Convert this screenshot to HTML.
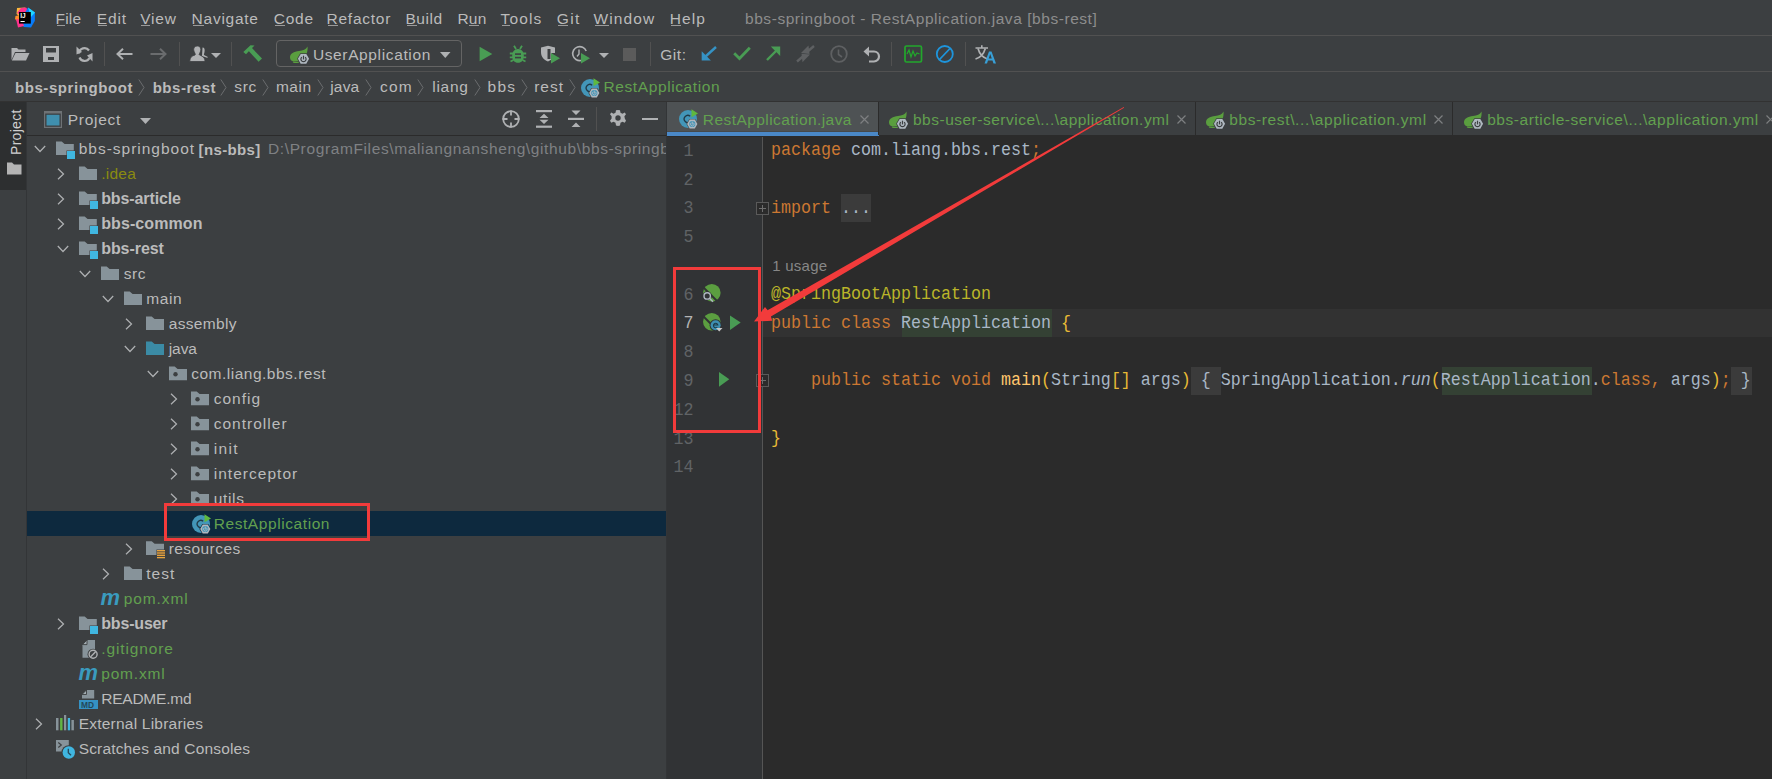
<!DOCTYPE html>
<html><head><meta charset="utf-8"><style>
html,body{margin:0;padding:0}
body{width:1772px;height:779px;overflow:hidden;position:relative;background:#3c3f41;font-family:"Liberation Sans",sans-serif}
svg{display:block}
</style></head><body>
<div style="position:absolute;left:0px;top:0px;width:1772px;height:35px;background:#3c3f41;"></div>
<div style="position:absolute;left:0px;top:35px;width:1772px;height:1px;background:#515151;"></div>
<div style="position:absolute;left:0px;top:36px;width:1772px;height:35px;background:#3c3f41;"></div>
<div style="position:absolute;left:0px;top:71px;width:1772px;height:1px;background:#515151;"></div>
<div style="position:absolute;left:0px;top:72px;width:1772px;height:29px;background:#3c3f41;"></div>
<div style="position:absolute;left:0px;top:101px;width:1772px;height:1px;background:#323232;"></div>
<div style="position:absolute;left:0px;top:102px;width:26px;height:677px;background:#3c3f41;"></div>
<div style="position:absolute;left:0px;top:102px;width:26px;height:88px;background:#2d2f30;"></div>
<div style="position:absolute;left:26px;top:102px;width:1px;height:677px;background:#333537;"></div>
<div style="position:absolute;left:27px;top:102px;width:639px;height:677px;background:#3c3f41;"></div>
<div style="position:absolute;left:27px;top:135px;width:639px;height:1px;background:#2b2b2b;"></div>
<div style="position:absolute;left:666px;top:102px;width:1px;height:677px;background:#333537;"></div>
<div style="position:absolute;left:667px;top:102px;width:1105px;height:33px;background:#3c3f41;"></div>
<div style="position:absolute;left:667px;top:135px;width:1105px;height:2px;background:#2b2b2b;"></div>
<div style="position:absolute;left:667px;top:102px;width:211px;height:29px;background:#4e5254;"></div>
<div style="position:absolute;left:667px;top:131px;width:211px;height:1px;background:#46494b;"></div>
<div style="position:absolute;left:667px;top:132px;width:212px;height:4px;background:#4a88c7;"></div>
<div style="position:absolute;left:878px;top:102px;width:1px;height:33px;background:#2b2b2b;"></div>
<div style="position:absolute;left:1195px;top:102px;width:1px;height:33px;background:#2b2b2b;"></div>
<div style="position:absolute;left:1452px;top:102px;width:1px;height:33px;background:#2b2b2b;"></div>
<div style="position:absolute;left:667px;top:137px;width:95px;height:642px;background:#313335;"></div>
<div style="position:absolute;left:762px;top:137px;width:1px;height:642px;background:#555555;"></div>
<div style="position:absolute;left:763px;top:137px;width:1009px;height:642px;background:#2b2b2b;"></div>
<div style="position:absolute;left:55.60px;top:10.88px;height:15.5px;line-height:15.5px;font-family:'Liberation Sans',sans-serif;font-size:15.5px;font-weight:normal;color:#bbbbbb;white-space:pre;letter-spacing:0.172px;">File</div>
<div style="position:absolute;left:56.5px;top:25px;width:8px;height:1px;background:#9a9a9a;"></div>
<div style="position:absolute;left:96.80px;top:10.88px;height:15.5px;line-height:15.5px;font-family:'Liberation Sans',sans-serif;font-size:15.5px;font-weight:normal;color:#bbbbbb;white-space:pre;letter-spacing:0.827px;">Edit</div>
<div style="position:absolute;left:97.8px;top:25px;width:9px;height:1px;background:#9a9a9a;"></div>
<div style="position:absolute;left:140.20px;top:10.88px;height:15.5px;line-height:15.5px;font-family:'Liberation Sans',sans-serif;font-size:15.5px;font-weight:normal;color:#bbbbbb;white-space:pre;letter-spacing:0.791px;">View</div>
<div style="position:absolute;left:141px;top:25px;width:9px;height:1px;background:#9a9a9a;"></div>
<div style="position:absolute;left:191.60px;top:10.88px;height:15.5px;line-height:15.5px;font-family:'Liberation Sans',sans-serif;font-size:15.5px;font-weight:normal;color:#bbbbbb;white-space:pre;letter-spacing:0.745px;">Navigate</div>
<div style="position:absolute;left:192.5px;top:25px;width:11px;height:1px;background:#9a9a9a;"></div>
<div style="position:absolute;left:273.70px;top:10.88px;height:15.5px;line-height:15.5px;font-family:'Liberation Sans',sans-serif;font-size:15.5px;font-weight:normal;color:#bbbbbb;white-space:pre;letter-spacing:0.779px;">Code</div>
<div style="position:absolute;left:274.5px;top:25px;width:10px;height:1px;background:#9a9a9a;"></div>
<div style="position:absolute;left:326.50px;top:10.88px;height:15.5px;line-height:15.5px;font-family:'Liberation Sans',sans-serif;font-size:15.5px;font-weight:normal;color:#bbbbbb;white-space:pre;letter-spacing:0.758px;">Refactor</div>
<div style="position:absolute;left:327.5px;top:25px;width:10px;height:1px;background:#9a9a9a;"></div>
<div style="position:absolute;left:405.50px;top:10.88px;height:15.5px;line-height:15.5px;font-family:'Liberation Sans',sans-serif;font-size:15.5px;font-weight:normal;color:#bbbbbb;white-space:pre;letter-spacing:0.533px;">Build</div>
<div style="position:absolute;left:406.5px;top:25px;width:10px;height:1px;background:#9a9a9a;"></div>
<div style="position:absolute;left:457.50px;top:10.88px;height:15.5px;line-height:15.5px;font-family:'Liberation Sans',sans-serif;font-size:15.5px;font-weight:normal;color:#bbbbbb;white-space:pre;letter-spacing:0.181px;">Run</div>
<div style="position:absolute;left:469px;top:25px;width:10px;height:1px;background:#9a9a9a;"></div>
<div style="position:absolute;left:500.50px;top:10.88px;height:15.5px;line-height:15.5px;font-family:'Liberation Sans',sans-serif;font-size:15.5px;font-weight:normal;color:#bbbbbb;white-space:pre;letter-spacing:1.153px;">Tools</div>
<div style="position:absolute;left:501.5px;top:25px;width:8px;height:1px;background:#9a9a9a;"></div>
<div style="position:absolute;left:556.70px;top:10.88px;height:15.5px;line-height:15.5px;font-family:'Liberation Sans',sans-serif;font-size:15.5px;font-weight:normal;color:#bbbbbb;white-space:pre;letter-spacing:1.394px;">Git</div>
<div style="position:absolute;left:557.5px;top:25px;width:10px;height:1px;background:#9a9a9a;"></div>
<div style="position:absolute;left:593.50px;top:10.88px;height:15.5px;line-height:15.5px;font-family:'Liberation Sans',sans-serif;font-size:15.5px;font-weight:normal;color:#bbbbbb;white-space:pre;letter-spacing:1.132px;">Window</div>
<div style="position:absolute;left:594.5px;top:25px;width:14px;height:1px;background:#9a9a9a;"></div>
<div style="position:absolute;left:669.70px;top:10.88px;height:15.5px;line-height:15.5px;font-family:'Liberation Sans',sans-serif;font-size:15.5px;font-weight:normal;color:#bbbbbb;white-space:pre;letter-spacing:1.136px;">Help</div>
<div style="position:absolute;left:670.5px;top:25px;width:10px;height:1px;background:#9a9a9a;"></div>
<div style="position:absolute;left:745.00px;top:10.88px;height:15.5px;line-height:15.5px;font-family:'Liberation Sans',sans-serif;font-size:15.5px;font-weight:normal;color:#8d8d8d;white-space:pre;letter-spacing:0.556px;">bbs-springboot - RestApplication.java [bbs-rest]</div>
<div style="position:absolute;left:276px;top:40px;width:184px;height:25px;border:1px solid #646464;border-radius:4px;background:#3c3f41"></div>
<div style="position:absolute;left:312.90px;top:47.28px;height:15.5px;line-height:15.5px;font-family:'Liberation Sans',sans-serif;font-size:15.5px;font-weight:normal;color:#bbbbbb;white-space:pre;letter-spacing:0.631px;">UserApplication</div>
<div style="position:absolute;left:660.20px;top:47.28px;height:15.5px;line-height:15.5px;font-family:'Liberation Sans',sans-serif;font-size:15.5px;font-weight:normal;color:#bbbbbb;white-space:pre;letter-spacing:0.558px;">Git:</div>
<div style="position:absolute;left:14.90px;top:79.60px;height:15px;line-height:15px;font-family:'Liberation Sans',sans-serif;font-size:15px;font-weight:bold;color:#bbbbbb;white-space:pre;letter-spacing:0.586px;">bbs-springboot</div>
<div style="position:absolute;left:152.70px;top:79.60px;height:15px;line-height:15px;font-family:'Liberation Sans',sans-serif;font-size:15px;font-weight:bold;color:#bbbbbb;white-space:pre;letter-spacing:0.516px;">bbs-rest</div>
<div style="position:absolute;left:234.20px;top:79.18px;height:15.5px;line-height:15.5px;font-family:'Liberation Sans',sans-serif;font-size:15.5px;font-weight:normal;color:#bbbbbb;white-space:pre;letter-spacing:0.714px;">src</div>
<div style="position:absolute;left:275.90px;top:79.18px;height:15.5px;line-height:15.5px;font-family:'Liberation Sans',sans-serif;font-size:15.5px;font-weight:normal;color:#bbbbbb;white-space:pre;letter-spacing:0.564px;">main</div>
<div style="position:absolute;left:330.20px;top:79.18px;height:15.5px;line-height:15.5px;font-family:'Liberation Sans',sans-serif;font-size:15.5px;font-weight:normal;color:#bbbbbb;white-space:pre;letter-spacing:0.188px;">java</div>
<div style="position:absolute;left:380.10px;top:79.18px;height:15.5px;line-height:15.5px;font-family:'Liberation Sans',sans-serif;font-size:15.5px;font-weight:normal;color:#bbbbbb;white-space:pre;letter-spacing:1.152px;">com</div>
<div style="position:absolute;left:432.20px;top:79.18px;height:15.5px;line-height:15.5px;font-family:'Liberation Sans',sans-serif;font-size:15.5px;font-weight:normal;color:#bbbbbb;white-space:pre;letter-spacing:0.763px;">liang</div>
<div style="position:absolute;left:487.60px;top:79.18px;height:15.5px;line-height:15.5px;font-family:'Liberation Sans',sans-serif;font-size:15.5px;font-weight:normal;color:#bbbbbb;white-space:pre;letter-spacing:1.200px;">bbs</div>
<div style="position:absolute;left:534.20px;top:79.18px;height:15.5px;line-height:15.5px;font-family:'Liberation Sans',sans-serif;font-size:15.5px;font-weight:normal;color:#bbbbbb;white-space:pre;letter-spacing:0.985px;">rest</div>
<div style="position:absolute;left:603.50px;top:79.18px;height:15.5px;line-height:15.5px;font-family:'Liberation Sans',sans-serif;font-size:15.5px;font-weight:normal;color:#62a04f;white-space:pre;letter-spacing:0.600px;">RestApplication</div>
<svg style="position:absolute;left:138px;top:79px;overflow:visible" width="7" height="17" viewBox="0 0 7 17"><path d="M0.8 0.5 L6 8.5 L0.8 16.5" fill="none" stroke="#6b6d6f" stroke-width="1"/></svg>
<svg style="position:absolute;left:220px;top:79px;overflow:visible" width="7" height="17" viewBox="0 0 7 17"><path d="M0.8 0.5 L6 8.5 L0.8 16.5" fill="none" stroke="#6b6d6f" stroke-width="1"/></svg>
<svg style="position:absolute;left:262px;top:79px;overflow:visible" width="7" height="17" viewBox="0 0 7 17"><path d="M0.8 0.5 L6 8.5 L0.8 16.5" fill="none" stroke="#6b6d6f" stroke-width="1"/></svg>
<svg style="position:absolute;left:317px;top:79px;overflow:visible" width="7" height="17" viewBox="0 0 7 17"><path d="M0.8 0.5 L6 8.5 L0.8 16.5" fill="none" stroke="#6b6d6f" stroke-width="1"/></svg>
<svg style="position:absolute;left:365px;top:79px;overflow:visible" width="7" height="17" viewBox="0 0 7 17"><path d="M0.8 0.5 L6 8.5 L0.8 16.5" fill="none" stroke="#6b6d6f" stroke-width="1"/></svg>
<svg style="position:absolute;left:417px;top:79px;overflow:visible" width="7" height="17" viewBox="0 0 7 17"><path d="M0.8 0.5 L6 8.5 L0.8 16.5" fill="none" stroke="#6b6d6f" stroke-width="1"/></svg>
<svg style="position:absolute;left:474px;top:79px;overflow:visible" width="7" height="17" viewBox="0 0 7 17"><path d="M0.8 0.5 L6 8.5 L0.8 16.5" fill="none" stroke="#6b6d6f" stroke-width="1"/></svg>
<svg style="position:absolute;left:521px;top:79px;overflow:visible" width="7" height="17" viewBox="0 0 7 17"><path d="M0.8 0.5 L6 8.5 L0.8 16.5" fill="none" stroke="#6b6d6f" stroke-width="1"/></svg>
<svg style="position:absolute;left:569px;top:79px;overflow:visible" width="7" height="17" viewBox="0 0 7 17"><path d="M0.8 0.5 L6 8.5 L0.8 16.5" fill="none" stroke="#6b6d6f" stroke-width="1"/></svg>
<div style="position:absolute;left:67.70px;top:112.28px;height:15.5px;line-height:15.5px;font-family:'Liberation Sans',sans-serif;font-size:15.5px;font-weight:normal;color:#bbbbbb;white-space:pre;letter-spacing:0.725px;">Project</div>
<div style="position:absolute;left:702.80px;top:111.88px;height:15.5px;line-height:15.5px;font-family:'Liberation Sans',sans-serif;font-size:15.5px;font-weight:normal;color:#62a04f;white-space:pre;letter-spacing:0.434px;">RestApplication.java</div>
<svg style="position:absolute;left:859.8px;top:114.5px;overflow:visible" width="9" height="9" viewBox="0 0 9 9"><path d="M0.5 0.5 L8.5 8.5 M8.5 0.5 L0.5 8.5" stroke="#7d7f81" stroke-width="1.2"/></svg>
<div style="position:absolute;left:913.00px;top:111.88px;height:15.5px;line-height:15.5px;font-family:'Liberation Sans',sans-serif;font-size:15.5px;font-weight:normal;color:#62a04f;white-space:pre;letter-spacing:0.496px;">bbs-user-service\...\application.yml</div>
<svg style="position:absolute;left:1176.7px;top:114.5px;overflow:visible" width="9" height="9" viewBox="0 0 9 9"><path d="M0.5 0.5 L8.5 8.5 M8.5 0.5 L0.5 8.5" stroke="#7d7f81" stroke-width="1.2"/></svg>
<div style="position:absolute;left:1229.20px;top:111.88px;height:15.5px;line-height:15.5px;font-family:'Liberation Sans',sans-serif;font-size:15.5px;font-weight:normal;color:#62a04f;white-space:pre;letter-spacing:0.624px;">bbs-rest\...\application.yml</div>
<svg style="position:absolute;left:1434px;top:114.5px;overflow:visible" width="9" height="9" viewBox="0 0 9 9"><path d="M0.5 0.5 L8.5 8.5 M8.5 0.5 L0.5 8.5" stroke="#7d7f81" stroke-width="1.2"/></svg>
<div style="position:absolute;left:1487.20px;top:111.88px;height:15.5px;line-height:15.5px;font-family:'Liberation Sans',sans-serif;font-size:15.5px;font-weight:normal;color:#62a04f;white-space:pre;letter-spacing:0.558px;">bbs-article-service\...\application.yml</div>
<svg style="position:absolute;left:1765.6px;top:114.5px;overflow:visible" width="9" height="9" viewBox="0 0 9 9"><path d="M0.5 0.5 L8.5 8.5 M8.5 0.5 L0.5 8.5" stroke="#7d7f81" stroke-width="1.2"/></svg>
<div style="position:absolute;left:27px;top:511px;width:639px;height:25px;background:#0d293e;"></div>
<svg style="position:absolute;left:34.0px;top:144.5px;overflow:visible" width="12" height="8" viewBox="0 0 12 8"><path d="M0.8 1 L6 6.5 L11.2 1" fill="none" stroke="#aeb0b2" stroke-width="1.25"/></svg>
<div style="position:absolute;left:78.70px;top:141.08px;height:15.5px;line-height:15.5px;font-family:'Liberation Sans',sans-serif;font-size:15.5px;font-weight:normal;color:#bbbbbb;white-space:pre;letter-spacing:0.989px;">bbs-springboot</div>
<div style="position:absolute;left:198.60px;top:141.50px;height:15px;line-height:15px;font-family:'Liberation Sans',sans-serif;font-size:15px;font-weight:bold;color:#bbbbbb;white-space:pre;letter-spacing:0.361px;">[ns-bbs]</div>
<div style="position:absolute;left:266px;top:136px;width:400px;height:25px;overflow:hidden">
<div style="position:absolute;left:-266px;top:0;width:1000px;height:25px">
<div style="position:absolute;left:268.00px;top:5.08px;height:15.5px;line-height:15.5px;font-family:'Liberation Sans',sans-serif;font-size:15.5px;font-weight:normal;color:#7f8184;white-space:pre;letter-spacing:0.620px;">D:\ProgramFiles\maliangnansheng\github\bbs-springboot</div>
</div></div>
<svg style="position:absolute;left:57.0px;top:167.5px;overflow:visible" width="8" height="12" viewBox="0 0 8 12"><path d="M1 0.8 L6.5 6 L1 11.2" fill="none" stroke="#aeb0b2" stroke-width="1.25"/></svg>
<div style="position:absolute;left:101.20px;top:166.08px;height:15.5px;line-height:15.5px;font-family:'Liberation Sans',sans-serif;font-size:15.5px;font-weight:normal;color:#8a8b10;white-space:pre;letter-spacing:0.269px;">.idea</div>
<svg style="position:absolute;left:57.0px;top:192.5px;overflow:visible" width="8" height="12" viewBox="0 0 8 12"><path d="M1 0.8 L6.5 6 L1 11.2" fill="none" stroke="#aeb0b2" stroke-width="1.25"/></svg>
<div style="position:absolute;left:101.20px;top:190.66px;height:16px;line-height:16px;font-family:'Liberation Sans',sans-serif;font-size:16px;font-weight:bold;color:#bbbbbb;white-space:pre;letter-spacing:-0.112px;">bbs-article</div>
<svg style="position:absolute;left:57.0px;top:217.5px;overflow:visible" width="8" height="12" viewBox="0 0 8 12"><path d="M1 0.8 L6.5 6 L1 11.2" fill="none" stroke="#aeb0b2" stroke-width="1.25"/></svg>
<div style="position:absolute;left:101.20px;top:215.66px;height:16px;line-height:16px;font-family:'Liberation Sans',sans-serif;font-size:16px;font-weight:bold;color:#bbbbbb;white-space:pre;letter-spacing:0.094px;">bbs-common</div>
<svg style="position:absolute;left:56.5px;top:244.5px;overflow:visible" width="12" height="8" viewBox="0 0 12 8"><path d="M0.8 1 L6 6.5 L11.2 1" fill="none" stroke="#aeb0b2" stroke-width="1.25"/></svg>
<div style="position:absolute;left:101.20px;top:240.66px;height:16px;line-height:16px;font-family:'Liberation Sans',sans-serif;font-size:16px;font-weight:bold;color:#bbbbbb;white-space:pre;letter-spacing:-0.061px;">bbs-rest</div>
<svg style="position:absolute;left:79.0px;top:269.5px;overflow:visible" width="12" height="8" viewBox="0 0 12 8"><path d="M0.8 1 L6 6.5 L11.2 1" fill="none" stroke="#aeb0b2" stroke-width="1.25"/></svg>
<div style="position:absolute;left:123.70px;top:266.08px;height:15.5px;line-height:15.5px;font-family:'Liberation Sans',sans-serif;font-size:15.5px;font-weight:normal;color:#bbbbbb;white-space:pre;letter-spacing:0.514px;">src</div>
<svg style="position:absolute;left:101.5px;top:294.5px;overflow:visible" width="12" height="8" viewBox="0 0 12 8"><path d="M0.8 1 L6 6.5 L11.2 1" fill="none" stroke="#aeb0b2" stroke-width="1.25"/></svg>
<div style="position:absolute;left:146.20px;top:291.08px;height:15.5px;line-height:15.5px;font-family:'Liberation Sans',sans-serif;font-size:15.5px;font-weight:normal;color:#bbbbbb;white-space:pre;letter-spacing:0.597px;">main</div>
<svg style="position:absolute;left:124.5px;top:317.5px;overflow:visible" width="8" height="12" viewBox="0 0 8 12"><path d="M1 0.8 L6.5 6 L1 11.2" fill="none" stroke="#aeb0b2" stroke-width="1.25"/></svg>
<div style="position:absolute;left:168.70px;top:316.08px;height:15.5px;line-height:15.5px;font-family:'Liberation Sans',sans-serif;font-size:15.5px;font-weight:normal;color:#bbbbbb;white-space:pre;letter-spacing:0.333px;">assembly</div>
<svg style="position:absolute;left:124.0px;top:344.5px;overflow:visible" width="12" height="8" viewBox="0 0 12 8"><path d="M0.8 1 L6 6.5 L11.2 1" fill="none" stroke="#aeb0b2" stroke-width="1.25"/></svg>
<div style="position:absolute;left:168.70px;top:341.08px;height:15.5px;line-height:15.5px;font-family:'Liberation Sans',sans-serif;font-size:15.5px;font-weight:normal;color:#bbbbbb;white-space:pre;letter-spacing:-0.046px;">java</div>
<svg style="position:absolute;left:146.5px;top:369.5px;overflow:visible" width="12" height="8" viewBox="0 0 12 8"><path d="M0.8 1 L6 6.5 L11.2 1" fill="none" stroke="#aeb0b2" stroke-width="1.25"/></svg>
<div style="position:absolute;left:191.20px;top:366.08px;height:15.5px;line-height:15.5px;font-family:'Liberation Sans',sans-serif;font-size:15.5px;font-weight:normal;color:#bbbbbb;white-space:pre;letter-spacing:0.501px;">com.liang.bbs.rest</div>
<svg style="position:absolute;left:169.5px;top:392.5px;overflow:visible" width="8" height="12" viewBox="0 0 8 12"><path d="M1 0.8 L6.5 6 L1 11.2" fill="none" stroke="#aeb0b2" stroke-width="1.25"/></svg>
<div style="position:absolute;left:213.70px;top:391.08px;height:15.5px;line-height:15.5px;font-family:'Liberation Sans',sans-serif;font-size:15.5px;font-weight:normal;color:#bbbbbb;white-space:pre;letter-spacing:1.005px;">config</div>
<svg style="position:absolute;left:169.5px;top:417.5px;overflow:visible" width="8" height="12" viewBox="0 0 8 12"><path d="M1 0.8 L6.5 6 L1 11.2" fill="none" stroke="#aeb0b2" stroke-width="1.25"/></svg>
<div style="position:absolute;left:213.70px;top:416.08px;height:15.5px;line-height:15.5px;font-family:'Liberation Sans',sans-serif;font-size:15.5px;font-weight:normal;color:#bbbbbb;white-space:pre;letter-spacing:1.017px;">controller</div>
<svg style="position:absolute;left:169.5px;top:442.5px;overflow:visible" width="8" height="12" viewBox="0 0 8 12"><path d="M1 0.8 L6.5 6 L1 11.2" fill="none" stroke="#aeb0b2" stroke-width="1.25"/></svg>
<div style="position:absolute;left:213.70px;top:441.08px;height:15.5px;line-height:15.5px;font-family:'Liberation Sans',sans-serif;font-size:15.5px;font-weight:normal;color:#bbbbbb;white-space:pre;letter-spacing:1.391px;">init</div>
<svg style="position:absolute;left:169.5px;top:467.5px;overflow:visible" width="8" height="12" viewBox="0 0 8 12"><path d="M1 0.8 L6.5 6 L1 11.2" fill="none" stroke="#aeb0b2" stroke-width="1.25"/></svg>
<div style="position:absolute;left:213.70px;top:466.08px;height:15.5px;line-height:15.5px;font-family:'Liberation Sans',sans-serif;font-size:15.5px;font-weight:normal;color:#bbbbbb;white-space:pre;letter-spacing:1.027px;">interceptor</div>
<svg style="position:absolute;left:169.5px;top:492.5px;overflow:visible" width="8" height="12" viewBox="0 0 8 12"><path d="M1 0.8 L6.5 6 L1 11.2" fill="none" stroke="#aeb0b2" stroke-width="1.25"/></svg>
<div style="position:absolute;left:213.70px;top:491.08px;height:15.5px;line-height:15.5px;font-family:'Liberation Sans',sans-serif;font-size:15.5px;font-weight:normal;color:#bbbbbb;white-space:pre;letter-spacing:0.680px;">utils</div>
<div style="position:absolute;left:213.70px;top:516.08px;height:15.5px;line-height:15.5px;font-family:'Liberation Sans',sans-serif;font-size:15.5px;font-weight:normal;color:#62a04f;white-space:pre;letter-spacing:0.578px;">RestApplication</div>
<svg style="position:absolute;left:124.5px;top:542.5px;overflow:visible" width="8" height="12" viewBox="0 0 8 12"><path d="M1 0.8 L6.5 6 L1 11.2" fill="none" stroke="#aeb0b2" stroke-width="1.25"/></svg>
<div style="position:absolute;left:168.70px;top:541.08px;height:15.5px;line-height:15.5px;font-family:'Liberation Sans',sans-serif;font-size:15.5px;font-weight:normal;color:#bbbbbb;white-space:pre;letter-spacing:0.430px;">resources</div>
<svg style="position:absolute;left:102.0px;top:567.5px;overflow:visible" width="8" height="12" viewBox="0 0 8 12"><path d="M1 0.8 L6.5 6 L1 11.2" fill="none" stroke="#aeb0b2" stroke-width="1.25"/></svg>
<div style="position:absolute;left:146.20px;top:566.08px;height:15.5px;line-height:15.5px;font-family:'Liberation Sans',sans-serif;font-size:15.5px;font-weight:normal;color:#bbbbbb;white-space:pre;letter-spacing:1.039px;">test</div>
<div style="position:absolute;left:123.70px;top:591.08px;height:15.5px;line-height:15.5px;font-family:'Liberation Sans',sans-serif;font-size:15.5px;font-weight:normal;color:#62a04f;white-space:pre;letter-spacing:0.920px;">pom.xml</div>
<svg style="position:absolute;left:57.0px;top:617.5px;overflow:visible" width="8" height="12" viewBox="0 0 8 12"><path d="M1 0.8 L6.5 6 L1 11.2" fill="none" stroke="#aeb0b2" stroke-width="1.25"/></svg>
<div style="position:absolute;left:101.20px;top:615.66px;height:16px;line-height:16px;font-family:'Liberation Sans',sans-serif;font-size:16px;font-weight:bold;color:#bbbbbb;white-space:pre;letter-spacing:-0.168px;">bbs-user</div>
<div style="position:absolute;left:101.20px;top:641.08px;height:15.5px;line-height:15.5px;font-family:'Liberation Sans',sans-serif;font-size:15.5px;font-weight:normal;color:#62a04f;white-space:pre;letter-spacing:0.893px;">.gitignore</div>
<div style="position:absolute;left:101.20px;top:666.08px;height:15.5px;line-height:15.5px;font-family:'Liberation Sans',sans-serif;font-size:15.5px;font-weight:normal;color:#62a04f;white-space:pre;letter-spacing:0.820px;">pom.xml</div>
<div style="position:absolute;left:101.20px;top:691.08px;height:15.5px;line-height:15.5px;font-family:'Liberation Sans',sans-serif;font-size:15.5px;font-weight:normal;color:#bbbbbb;white-space:pre;letter-spacing:-0.220px;">README.md</div>
<svg style="position:absolute;left:34.5px;top:717.5px;overflow:visible" width="8" height="12" viewBox="0 0 8 12"><path d="M1 0.8 L6.5 6 L1 11.2" fill="none" stroke="#aeb0b2" stroke-width="1.25"/></svg>
<div style="position:absolute;left:78.70px;top:716.08px;height:15.5px;line-height:15.5px;font-family:'Liberation Sans',sans-serif;font-size:15.5px;font-weight:normal;color:#bbbbbb;white-space:pre;letter-spacing:0.223px;">External Libraries</div>
<div style="position:absolute;left:78.70px;top:741.08px;height:15.5px;line-height:15.5px;font-family:'Liberation Sans',sans-serif;font-size:15.5px;font-weight:normal;color:#bbbbbb;white-space:pre;letter-spacing:0.161px;">Scratches and Consoles</div>
<svg style="position:absolute;left:56.0px;top:136px;overflow:visible" width="22" height="25" viewBox="0 0 22 25"><path d="M0 5.5 H5.7 L8.6 8.0 H17.8 V19.0 H0 Z" fill="#87939a"/><rect x="10.5" y="14.5" width="9" height="9" fill="#3c3f41"/><rect x="11" y="15" width="8" height="8" fill="#40b6e0"/></svg>
<svg style="position:absolute;left:78.5px;top:161px;overflow:visible" width="22" height="25" viewBox="0 0 22 25"><path d="M0 5.5 H5.7 L8.6 8.0 H18 V19.0 H0 Z" fill="#87939a"/></svg>
<svg style="position:absolute;left:78.5px;top:186px;overflow:visible" width="22" height="25" viewBox="0 0 22 25"><path d="M0 5.5 H5.7 L8.6 8.0 H17.8 V19.0 H0 Z" fill="#87939a"/><rect x="10.5" y="14.5" width="9" height="9" fill="#3c3f41"/><rect x="11" y="15" width="8" height="8" fill="#40b6e0"/></svg>
<svg style="position:absolute;left:78.5px;top:211px;overflow:visible" width="22" height="25" viewBox="0 0 22 25"><path d="M0 5.5 H5.7 L8.6 8.0 H17.8 V19.0 H0 Z" fill="#87939a"/><rect x="10.5" y="14.5" width="9" height="9" fill="#3c3f41"/><rect x="11" y="15" width="8" height="8" fill="#40b6e0"/></svg>
<svg style="position:absolute;left:78.5px;top:236px;overflow:visible" width="22" height="25" viewBox="0 0 22 25"><path d="M0 5.5 H5.7 L8.6 8.0 H17.8 V19.0 H0 Z" fill="#87939a"/><rect x="10.5" y="14.5" width="9" height="9" fill="#3c3f41"/><rect x="11" y="15" width="8" height="8" fill="#40b6e0"/></svg>
<svg style="position:absolute;left:101.0px;top:261px;overflow:visible" width="22" height="25" viewBox="0 0 22 25"><path d="M0 5.5 H5.7 L8.6 8.0 H18 V19.0 H0 Z" fill="#87939a"/></svg>
<svg style="position:absolute;left:123.5px;top:286px;overflow:visible" width="22" height="25" viewBox="0 0 22 25"><path d="M0 5.5 H5.7 L8.6 8.0 H18 V19.0 H0 Z" fill="#87939a"/></svg>
<svg style="position:absolute;left:146.0px;top:311px;overflow:visible" width="22" height="25" viewBox="0 0 22 25"><path d="M0 5.5 H5.7 L8.6 8.0 H18 V19.0 H0 Z" fill="#87939a"/></svg>
<svg style="position:absolute;left:146.0px;top:336px;overflow:visible" width="22" height="25" viewBox="0 0 22 25"><path d="M0 5.5 H5.7 L8.6 8.0 H18 V19.0 H0 Z" fill="#3b8ba5"/></svg>
<svg style="position:absolute;left:168.5px;top:361px;overflow:visible" width="22" height="25" viewBox="0 0 22 25"><path d="M0 5.6 H5.7 L8.6 8.1 H18 V19.2 H0 Z" fill="#87939a"/><circle cx="6.5" cy="13.3" r="2.2" fill="#3c3f41"/></svg>
<svg style="position:absolute;left:191.0px;top:386px;overflow:visible" width="22" height="25" viewBox="0 0 22 25"><path d="M0 5.6 H5.7 L8.6 8.1 H18 V19.2 H0 Z" fill="#87939a"/><circle cx="6.5" cy="13.3" r="2.2" fill="#3c3f41"/></svg>
<svg style="position:absolute;left:191.0px;top:411px;overflow:visible" width="22" height="25" viewBox="0 0 22 25"><path d="M0 5.6 H5.7 L8.6 8.1 H18 V19.2 H0 Z" fill="#87939a"/><circle cx="6.5" cy="13.3" r="2.2" fill="#3c3f41"/></svg>
<svg style="position:absolute;left:191.0px;top:436px;overflow:visible" width="22" height="25" viewBox="0 0 22 25"><path d="M0 5.6 H5.7 L8.6 8.1 H18 V19.2 H0 Z" fill="#87939a"/><circle cx="6.5" cy="13.3" r="2.2" fill="#3c3f41"/></svg>
<svg style="position:absolute;left:191.0px;top:461px;overflow:visible" width="22" height="25" viewBox="0 0 22 25"><path d="M0 5.6 H5.7 L8.6 8.1 H18 V19.2 H0 Z" fill="#87939a"/><circle cx="6.5" cy="13.3" r="2.2" fill="#3c3f41"/></svg>
<svg style="position:absolute;left:191.0px;top:486px;overflow:visible" width="22" height="25" viewBox="0 0 22 25"><path d="M0 5.6 H5.7 L8.6 8.1 H18 V19.2 H0 Z" fill="#87939a"/><circle cx="6.5" cy="13.3" r="2.2" fill="#3c3f41"/></svg>
<svg style="position:absolute;left:191.0px;top:514px;overflow:visible" width="22" height="21" viewBox="0 0 22 21"><circle cx="10" cy="10" r="9" fill="#4396b8"/><path d="M12.2 7.3 A3.6 3.6 0 1 0 12.2 12.7" fill="none" stroke="#203a47" stroke-width="1.3"/><path d="M13.5 0.2 L20 4.5 L13.5 8.3 Z" fill="#5fb83f"/><polygon points="20.20,15.00 17.25,20.11 11.35,20.11 8.40,15.00 11.35,9.89 17.25,9.89" fill="#0d293e"/><polygon points="19.40,15.00 16.85,19.42 11.75,19.42 9.20,15.00 11.75,10.58 16.85,10.58" fill="#afb8c0"/><circle cx="14.3" cy="15" r="3.1" fill="#4396b8"/><path d="M13.14 13.82 A1.8 1.8 0 1 0 15.46 13.82" fill="none" stroke="#afb8c0" stroke-width="0.9"/><path d="M14.3 12.599999999999998 V15.5" stroke="#afb8c0" stroke-width="0.9"/></svg>
<svg style="position:absolute;left:146.0px;top:536px;overflow:visible" width="22" height="25" viewBox="0 0 22 25"><path d="M0 5.3 H5.7 L8.6 7.8 H18 V19.0 H0 Z" fill="#87939a"/><rect x="10.5" y="13.5" width="9" height="10" fill="#3c3f41"/><rect x="11" y="14.0" width="8" height="1.4" fill="#e8a33e"/><rect x="11" y="16.3" width="8" height="1.4" fill="#e8a33e"/><rect x="11" y="18.6" width="8" height="1.4" fill="#e8a33e"/><rect x="11" y="20.9" width="8" height="1.4" fill="#e8a33e"/></svg>
<svg style="position:absolute;left:123.5px;top:561px;overflow:visible" width="22" height="25" viewBox="0 0 22 25"><path d="M0 5.5 H5.7 L8.6 8.0 H18 V19.0 H0 Z" fill="#87939a"/></svg>
<svg style="position:absolute;left:101.0px;top:586px;overflow:visible" width="22" height="25" viewBox="0 0 22 25"><text x="-0.5" y="19" font-family="Liberation Sans" font-weight="bold" font-style="italic" font-size="22" fill="#3a9bbf" transform="scale(1.0,1)" textLength="19.5" lengthAdjust="spacingAndGlyphs">m</text></svg>
<svg style="position:absolute;left:78.5px;top:611px;overflow:visible" width="22" height="25" viewBox="0 0 22 25"><path d="M0 5.5 H5.7 L8.6 8.0 H17.8 V19.0 H0 Z" fill="#87939a"/><rect x="10.5" y="14.5" width="9" height="9" fill="#3c3f41"/><rect x="11" y="15" width="8" height="8" fill="#40b6e0"/></svg>
<svg style="position:absolute;left:78.5px;top:636px;overflow:visible" width="22" height="25" viewBox="0 0 22 25"><path d="M8.6 4 H16 V21.8 H3.5 V9.2 Z" fill="#87939a"/><path d="M3.5 8.6 L8 4 V8.6 Z" fill="#a2acb2" stroke="#3c3f41" stroke-width="0.9"/><circle cx="14.1" cy="18.3" r="5.6" fill="#3c3f41"/><circle cx="14.1" cy="18.3" r="4" fill="none" stroke="#afb1b3" stroke-width="1.4"/><path d="M11.5 21 L16.8 15.6" stroke="#afb1b3" stroke-width="1.4"/></svg>
<svg style="position:absolute;left:78.5px;top:661px;overflow:visible" width="22" height="25" viewBox="0 0 22 25"><text x="-0.5" y="19" font-family="Liberation Sans" font-weight="bold" font-style="italic" font-size="22" fill="#3a9bbf" transform="scale(1.0,1)" textLength="19.5" lengthAdjust="spacingAndGlyphs">m</text></svg>
<svg style="position:absolute;left:78.5px;top:686px;overflow:visible" width="22" height="25" viewBox="0 0 22 25"><path d="M8 4 H15.2 V12.5 H3 V9 Z" fill="#87939a"/><path d="M3 8.5 L7.5 4 V8.5 Z" fill="#a2acb2" stroke="#3c3f41" stroke-width="0.9"/><rect x="0" y="14" width="19" height="9" fill="#3592c4"/><text x="2" y="22" font-family="Liberation Sans" font-weight="bold" font-size="9" fill="#23485a" textLength="13" lengthAdjust="spacingAndGlyphs">MD</text></svg>
<svg style="position:absolute;left:56.0px;top:711px;overflow:visible" width="22" height="25" viewBox="0 0 22 25"><rect x="0" y="7" width="2.5" height="12.3" fill="#87939a"/><rect x="4.1" y="7" width="2.4" height="12.3" fill="#62b543"/><rect x="8" y="4" width="2.2" height="15.3" fill="#87939a"/><rect x="11.8" y="7" width="2.3" height="12.3" fill="#40b6e0"/><rect x="15.4" y="9" width="2.5" height="10.3" fill="#87939a"/></svg>
<svg style="position:absolute;left:56.0px;top:736px;overflow:visible" width="22" height="25" viewBox="0 0 22 25"><rect x="0" y="4" width="12.8" height="11.5" fill="#87939a"/><path d="M2.3 6.5 L5.3 9 L2.3 11.5" fill="none" stroke="#3c3f41" stroke-width="1.2"/><circle cx="12.8" cy="16.5" r="7.3" fill="#3c3f41"/><circle cx="12.8" cy="16.5" r="6.2" fill="#40b6e0"/><path d="M12.3 12.8 V16.8 L15 19.3" fill="none" stroke="#23485a" stroke-width="1.3"/></svg>
<div style="position:absolute;left:763px;top:309px;width:1009px;height:28px;background:#323232;"></div>
<div style="position:absolute;left:841px;top:194px;width:30px;height:28px;background:#3b3b3b;"></div>
<div style="position:absolute;left:902px;top:309px;width:150px;height:28px;background:#344134;"></div>
<div style="position:absolute;left:1191px;top:366.5px;width:30px;height:28px;background:#3b3b3b;"></div>
<div style="position:absolute;left:1442px;top:366.5px;width:150px;height:28px;background:#344134;"></div>
<div style="position:absolute;left:1731px;top:366.5px;width:21px;height:28px;background:#3b3b3b;"></div>
<div style="position:absolute;left:771.00px;top:143.22px;height:16.667px;line-height:16.667px;font-family:'Liberation Mono',monospace;font-size:16.667px;font-weight:normal;color:#a9b7c6;white-space:pre;letter-spacing:0.000px;transform:scaleY(1.12);transform-origin:0 12.78px;"><span style="color:#cc7832;">package</span><span style="color:#a9b7c6;"> com.liang.bbs.rest</span><span style="color:#cc7832;">;</span></div>
<div style="position:absolute;left:771.00px;top:200.78px;height:16.667px;line-height:16.667px;font-family:'Liberation Mono',monospace;font-size:16.667px;font-weight:normal;color:#a9b7c6;white-space:pre;letter-spacing:0.000px;transform:scaleY(1.12);transform-origin:0 12.78px;"><span style="color:#cc7832;">import</span><span style="color:#a9b7c6;"> ...</span></div>
<div style="position:absolute;left:771.00px;top:287.12px;height:16.667px;line-height:16.667px;font-family:'Liberation Mono',monospace;font-size:16.667px;font-weight:normal;color:#a9b7c6;white-space:pre;letter-spacing:0.000px;transform:scaleY(1.12);transform-origin:0 12.78px;"><span style="color:#bbb529;">@SpringBootApplication</span></div>
<div style="position:absolute;left:771.00px;top:315.90px;height:16.667px;line-height:16.667px;font-family:'Liberation Mono',monospace;font-size:16.667px;font-weight:normal;color:#a9b7c6;white-space:pre;letter-spacing:0.000px;transform:scaleY(1.12);transform-origin:0 12.78px;"><span style="color:#cc7832;">public class </span><span style="color:#a9b7c6;">RestApplication </span><span style="color:#e8ba36;">{</span></div>
<div style="position:absolute;left:771.00px;top:373.46px;height:16.667px;line-height:16.667px;font-family:'Liberation Mono',monospace;font-size:16.667px;font-weight:normal;color:#a9b7c6;white-space:pre;letter-spacing:0.000px;transform:scaleY(1.12);transform-origin:0 12.78px;"><span style="color:#cc7832;">    public static void </span><span style="color:#ffc66d;">main</span><span style="color:#e8ba36;">(</span><span style="color:#a9b7c6;">String</span><span style="color:#e8ba36;">[]</span><span style="color:#a9b7c6;"> args</span><span style="color:#e8ba36;">)</span><span style="color:#a9b7c6;"> { </span><span style="color:#a9b7c6;">SpringApplication.</span><span style="color:#a9b7c6;font-style:italic">run</span><span style="color:#e8ba36;">(</span><span style="color:#a9b7c6;">RestApplication.</span><span style="color:#cc7832;">class,</span><span style="color:#a9b7c6;"> args</span><span style="color:#e8ba36;">)</span><span style="color:#cc7832;">;</span><span style="color:#a9b7c6;"> }</span></div>
<div style="position:absolute;left:771.00px;top:431.02px;height:16.667px;line-height:16.667px;font-family:'Liberation Mono',monospace;font-size:16.667px;font-weight:normal;color:#a9b7c6;white-space:pre;letter-spacing:0.000px;transform:scaleY(1.12);transform-origin:0 12.78px;"><span style="color:#e8ba36;">}</span></div>
<div style="position:absolute;left:772.20px;top:258.30px;height:15px;line-height:15px;font-family:'Liberation Sans',sans-serif;font-size:15px;font-weight:normal;color:#878787;white-space:pre;letter-spacing:0.252px;">1 usage</div>
<div style="position:absolute;left:683.50px;top:143.72px;height:16.667px;line-height:16.667px;font-family:'Liberation Mono',monospace;font-size:16.667px;font-weight:normal;color:#606366;white-space:pre;letter-spacing:0.000px;transform:scaleY(1.12);transform-origin:0 12.78px;">1</div>
<div style="position:absolute;left:683.50px;top:172.50px;height:16.667px;line-height:16.667px;font-family:'Liberation Mono',monospace;font-size:16.667px;font-weight:normal;color:#606366;white-space:pre;letter-spacing:0.000px;transform:scaleY(1.12);transform-origin:0 12.78px;">2</div>
<div style="position:absolute;left:683.50px;top:201.28px;height:16.667px;line-height:16.667px;font-family:'Liberation Mono',monospace;font-size:16.667px;font-weight:normal;color:#606366;white-space:pre;letter-spacing:0.000px;transform:scaleY(1.12);transform-origin:0 12.78px;">3</div>
<div style="position:absolute;left:683.50px;top:230.06px;height:16.667px;line-height:16.667px;font-family:'Liberation Mono',monospace;font-size:16.667px;font-weight:normal;color:#606366;white-space:pre;letter-spacing:0.000px;transform:scaleY(1.12);transform-origin:0 12.78px;">5</div>
<div style="position:absolute;left:683.50px;top:287.62px;height:16.667px;line-height:16.667px;font-family:'Liberation Mono',monospace;font-size:16.667px;font-weight:normal;color:#606366;white-space:pre;letter-spacing:0.000px;transform:scaleY(1.12);transform-origin:0 12.78px;">6</div>
<div style="position:absolute;left:683.50px;top:316.40px;height:16.667px;line-height:16.667px;font-family:'Liberation Mono',monospace;font-size:16.667px;font-weight:normal;color:#b4b4b4;white-space:pre;letter-spacing:0.000px;transform:scaleY(1.12);transform-origin:0 12.78px;">7</div>
<div style="position:absolute;left:683.50px;top:345.18px;height:16.667px;line-height:16.667px;font-family:'Liberation Mono',monospace;font-size:16.667px;font-weight:normal;color:#606366;white-space:pre;letter-spacing:0.000px;transform:scaleY(1.12);transform-origin:0 12.78px;">8</div>
<div style="position:absolute;left:683.50px;top:373.96px;height:16.667px;line-height:16.667px;font-family:'Liberation Mono',monospace;font-size:16.667px;font-weight:normal;color:#606366;white-space:pre;letter-spacing:0.000px;transform:scaleY(1.12);transform-origin:0 12.78px;">9</div>
<div style="position:absolute;left:673.50px;top:402.74px;height:16.667px;line-height:16.667px;font-family:'Liberation Mono',monospace;font-size:16.667px;font-weight:normal;color:#606366;white-space:pre;letter-spacing:0.000px;transform:scaleY(1.12);transform-origin:0 12.78px;">12</div>
<div style="position:absolute;left:673.50px;top:431.52px;height:16.667px;line-height:16.667px;font-family:'Liberation Mono',monospace;font-size:16.667px;font-weight:normal;color:#606366;white-space:pre;letter-spacing:0.000px;transform:scaleY(1.12);transform-origin:0 12.78px;">13</div>
<div style="position:absolute;left:673.50px;top:460.30px;height:16.667px;line-height:16.667px;font-family:'Liberation Mono',monospace;font-size:16.667px;font-weight:normal;color:#606366;white-space:pre;letter-spacing:0.000px;transform:scaleY(1.12);transform-origin:0 12.78px;">14</div>
<svg style="position:absolute;left:756px;top:202px;overflow:visible" width="13" height="13" viewBox="0 0 13 13"><rect x="0.5" y="0.5" width="12" height="12" fill="#2b2b2b" stroke="#5a5a5a" stroke-width="1"/><path d="M3 6.5 H10 M6.5 3 V10" stroke="#6e6e6e" stroke-width="1"/></svg>
<svg style="position:absolute;left:756px;top:374px;overflow:visible" width="13" height="13" viewBox="0 0 13 13"><rect x="0.5" y="0.5" width="12" height="12" fill="#2b2b2b" stroke="#5a5a5a" stroke-width="1"/><path d="M3 6.5 H10 M6.5 3 V10" stroke="#6e6e6e" stroke-width="1"/></svg>
<svg style="position:absolute;left:14px;top:7px;overflow:visible" width="22" height="22" viewBox="0 0 22 22"><path d="M3 1 L11 0.5 L13 5 L5 9 L2.5 7 Z" fill="#fdb73c"/><path d="M7 1 L12 0.5 L15 4 L9 9 L3 6 Z" fill="#ff318c"/><path d="M1.5 9 L6 8 L8 13 L4 15 L1 12 Z" fill="#ff8c2a"/><path d="M14 0.5 L21 5.5 L20.8 14 L17 20.5 L10 20 L5 16 Z" fill="#087cfa"/><path d="M14 0.5 L21 5.5 L17 10 Z" fill="#21d7ff"/><path d="M2 12 L8 13 L10 19 L4 20.5 Z" fill="#ff318c"/><rect x="5" y="5" width="11.8" height="11.6" fill="#000"/><text x="6.3" y="11.3" font-family="Liberation Sans" font-weight="bold" font-size="6.5" fill="#fff">IJ</text><rect x="6.5" y="14" width="4.2" height="1" fill="#fff"/></svg>
<div style="position:absolute;left:104px;top:42px;width:1px;height:24px;background:#515151;"></div>
<div style="position:absolute;left:179px;top:42px;width:1px;height:24px;background:#515151;"></div>
<div style="position:absolute;left:231px;top:42px;width:1px;height:24px;background:#515151;"></div>
<div style="position:absolute;left:650px;top:42px;width:1px;height:24px;background:#515151;"></div>
<div style="position:absolute;left:891px;top:42px;width:1px;height:24px;background:#515151;"></div>
<div style="position:absolute;left:965px;top:42px;width:1px;height:24px;background:#515151;"></div>
<svg style="position:absolute;left:11px;top:47px;overflow:visible" width="19" height="14" viewBox="0 0 19 14"><path d="M0.5 1 H6 L7.5 2.5 H14.5 V5 H4 L0.5 13 Z" fill="#afb1b3"/><path d="M4.5 6 H18.5 L15 13.5 H0.8 Z" fill="#afb1b3"/></svg>
<svg style="position:absolute;left:43px;top:46px;overflow:visible" width="16" height="16" viewBox="0 0 16 16"><path d="M0 0 H16 V16 H0 Z M3 2 V6.5 H13 V2 Z M5 11 V14 H11 V11 Z" fill="#afb1b3" fill-rule="evenodd"/></svg>
<svg style="position:absolute;left:76px;top:46px;overflow:visible" width="17" height="16" viewBox="0 0 17 16"><path d="M3 7.5 A5.5 5.5 0 0 1 13 4.5" fill="none" stroke="#afb1b3" stroke-width="2.2"/><path d="M13.5 12 A5.5 5.5 0 0 1 3.5 11.5" fill="none" stroke="#afb1b3" stroke-width="2.2"/><path d="M0.5 1 L6 6.5 L0.5 9 Z" fill="#afb1b3" transform="translate(0,-0.5)"/><path d="M16.5 15.5 L11 9.5 L16.5 7 Z" fill="#afb1b3"/></svg>
<svg style="position:absolute;left:116px;top:48px;overflow:visible" width="17" height="12" viewBox="0 0 17 12"><path d="M1.5 6 H16.5 M7 0.8 L1.5 6 L7 11.2" fill="none" stroke="#afb1b3" stroke-width="2"/></svg>
<svg style="position:absolute;left:150px;top:48px;overflow:visible" width="17" height="12" viewBox="0 0 17 12"><path d="M0.5 6 H15.5 M10 0.8 L15.5 6 L10 11.2" fill="none" stroke="#6a6c6e" stroke-width="2"/></svg>
<svg style="position:absolute;left:189px;top:46px;overflow:visible" width="20" height="16" viewBox="0 0 20 16"><path d="M13.5 1.5 C15.5 1.5 16 3.5 15.5 6 C15.2 7.5 14.8 8.3 15 9 L18.5 10.8 C19 11.2 18.5 12 18 11.8 L13 10 Z" fill="#afb1b3"/><path d="M14 11 C14 11 12.5 9.5 10.5 9 C10 8.8 10.2 8 10.8 7 C11.6 5.5 11.8 4.5 11.8 3.5 C11.8 1.2 10.5 0 8.3 0 C6 0 4.7 1.3 4.7 3.5 C4.7 4.5 5 5.5 5.8 7 C6.3 8 6.5 8.8 6 9 C3 10 1 11 0.8 15.5 H16 C16 13 15.2 12 14 11 Z" fill="#afb1b3" stroke="#3c3f41" stroke-width="0.8"/></svg>
<svg style="position:absolute;left:211px;top:53px;overflow:visible" width="10" height="5" viewBox="0 0 10 5"><path d="M0 0 H10 L5.0 5 Z" fill="#afb1b3"/></svg>
<svg style="position:absolute;left:243px;top:45px;overflow:visible" width="20" height="18" viewBox="0 0 20 18"><path d="M0.3 7 L7.5 0.3 L11.5 0.5 L7 5 L3 9.2 Z" fill="#499c54"/><path d="M5 5.3 L8.3 2.3 L19 13.5 L15.6 16.7 Z" fill="#499c54"/></svg>
<svg style="position:absolute;left:289px;top:46px;overflow:visible" width="21" height="18" viewBox="0 0 21 18"><path d="M18.5 0.5 C17 3.5 14 4.5 10 5 C5 5.5 1 7.5 1 11.5 C1 14 3 15.5 5.5 15.5 C11 15.5 15 12.5 17 9 C18.5 6.5 18.8 3 18.5 0.5 Z" fill="#5a9e3f"/><path d="M4 15.9 Q7 16.9 10 15.9" stroke="#5a9e3f" stroke-width="1.1" fill="none"/><polygon points="20.90,12.80 17.70,18.34 11.30,18.34 8.10,12.80 11.30,7.26 17.70,7.26" fill="#3c3f41"/><polygon points="20.10,12.80 17.30,17.65 11.70,17.65 8.90,12.80 11.70,7.95 17.30,7.95" fill="#afb8c0"/><path d="M12.83 11.11 A2.6 2.6 0 1 0 16.17 11.11" fill="none" stroke="#3c3f41" stroke-width="1.2"/><path d="M14.5 9.7 V13.4" stroke="#3c3f41" stroke-width="1.2"/></svg>
<svg style="position:absolute;left:440px;top:51.5px;overflow:visible" width="10.5" height="6" viewBox="0 0 10.5 6"><path d="M0 0 H10.5 L5.25 6 Z" fill="#afb1b3"/></svg>
<svg style="position:absolute;left:479px;top:46px;overflow:visible" width="14" height="16" viewBox="0 0 14 16"><path d="M0.6 0.7 L13.3 7.9 L0.6 15.3 Z" fill="#499c54"/></svg>
<svg style="position:absolute;left:509px;top:45px;overflow:visible" width="18" height="18" viewBox="0 0 18 18"><path d="M9 4 C13 4 14.8 7 14.8 11 C14.8 15 12.5 17.8 9 17.8 C5.5 17.8 3.2 15 3.2 11 C3.2 7 5 4 9 4 Z" fill="#499c54"/><path d="M5 0.8 L7 4 M13 0.8 L11 4 M0.8 8.5 H4 M14 8.5 H17.2 M0.8 12.3 H4 M14 12.3 H17.2 M1.5 16.5 L4.5 15 M16.5 16.5 L13.5 15" stroke="#499c54" stroke-width="1.8"/><rect x="6" y="8.3" width="6" height="1.6" fill="#3c3f41"/><rect x="6" y="11.8" width="6" height="1.6" fill="#3c3f41"/></svg>
<svg style="position:absolute;left:540px;top:45px;overflow:visible" width="21" height="19" viewBox="0 0 21 19"><path d="M1 2.5 L8 0.8 L15 2.5 V8 H11.5 V14.5 L8 16.5 C3 14.5 1 11 1 7 Z" fill="#afb1b3"/><path d="M9 4 V14" stroke="#3c3f41" stroke-width="3"/><path d="M11 8 L20 13.2 L11 18.5 Z" fill="#499c54"/></svg>
<svg style="position:absolute;left:571px;top:45px;overflow:visible" width="20" height="19" viewBox="0 0 20 19"><path d="M10 15.5 A7 7 0 1 1 15.2 6" fill="none" stroke="#afb1b3" stroke-width="1.6"/><path d="M8 4.5 V9 L6 11.5" fill="none" stroke="#afb1b3" stroke-width="1.4"/><path d="M10 8 L19 13.2 L10 18.5 Z" fill="#499c54"/></svg>
<svg style="position:absolute;left:599px;top:53px;overflow:visible" width="10" height="5" viewBox="0 0 10 5"><path d="M0 0 H10 L5.0 5 Z" fill="#afb1b3"/></svg>
<div style="position:absolute;left:623px;top:48px;width:12.5px;height:12.5px;background:#5b5b5b;"></div>
<svg style="position:absolute;left:701px;top:46px;overflow:visible" width="16" height="15" viewBox="0 0 16 15"><path d="M4.5 10.5 L15 1" stroke="#3592c4" stroke-width="2.4"/><path d="M0.7 5.3 V14.5 H9.9 Z" fill="#3592c4"/></svg>
<svg style="position:absolute;left:733px;top:46px;overflow:visible" width="18" height="15" viewBox="0 0 18 15"><path d="M1.2 7.2 L6.5 12.5 L16.8 1.8" fill="none" stroke="#499c54" stroke-width="2.8"/></svg>
<svg style="position:absolute;left:766px;top:46px;overflow:visible" width="15" height="15" viewBox="0 0 15 15"><path d="M1 14 L10.5 4.5" stroke="#499c54" stroke-width="2.4"/><path d="M4.8 0.6 H14.2 V10 Z" fill="#499c54"/></svg>
<svg style="position:absolute;left:796px;top:45px;overflow:visible" width="19" height="18" viewBox="0 0 19 18"><path d="M11 7 L18 1" stroke="#5e6062" stroke-width="2.4"/><path d="M8.5 4.5 L12.5 0.5 L13.5 9 L5 8 Z" fill="#5e6062" transform="rotate(0)"/><path d="M8 10.5 L1 16.5" stroke="#5e6062" stroke-width="2.4"/><path d="M10.5 13 L6.5 17.2 L5.5 8.8 L14 9.6 Z" fill="#5e6062"/></svg>
<svg style="position:absolute;left:830px;top:45px;overflow:visible" width="19" height="18" viewBox="0 0 19 18"><circle cx="9" cy="9" r="7.8" fill="none" stroke="#5e6062" stroke-width="1.8"/><path d="M8.5 4.5 V9.5 L12 12" fill="none" stroke="#5e6062" stroke-width="1.6"/></svg>
<svg style="position:absolute;left:863px;top:46px;overflow:visible" width="18" height="16" viewBox="0 0 18 16"><path d="M5 5.5 H11 A5 5 0 0 1 11 15.5 H6" fill="none" stroke="#afb1b3" stroke-width="2.2"/><path d="M0.5 5.5 L6 0.5 V10.5 Z" fill="#afb1b3"/></svg>
<svg style="position:absolute;left:904px;top:45px;overflow:visible" width="19" height="18" viewBox="0 0 19 18"><rect x="1" y="1" width="16.5" height="16" rx="1.5" fill="none" stroke="#22a82c" stroke-width="1.7"/><path d="M3 9 L5 5 L7 12 L9 6 L11 11 L13 8 L15.5 9" fill="none" stroke="#22a82c" stroke-width="1.2"/></svg>
<svg style="position:absolute;left:935px;top:45px;overflow:visible" width="20" height="18" viewBox="0 0 20 18"><circle cx="9.8" cy="9" r="8" fill="none" stroke="#1e95dc" stroke-width="1.8"/><path d="M4.5 14.5 L15 3.5" stroke="#1e95dc" stroke-width="1.8"/></svg>
<svg style="position:absolute;left:975px;top:45px;overflow:visible" width="22" height="19" viewBox="0 0 22 19"><path d="M6.8 0.3 V2.5 M0.5 3 H13" stroke="#afb1b3" stroke-width="1.6"/><path d="M3 3.5 C4.5 9 8 12.5 12.5 14 M10.3 3.5 C8.8 9 5.5 12.5 0.5 14" fill="none" stroke="#afb1b3" stroke-width="1.7"/><path d="M9.5 18.5 L14 6.5 H16.5 L21 18.5 H18.5 L17.5 15.5 H13 L12 18.5 Z M13.7 13.5 H16.8 L15.25 9 Z" fill="#389fd6" fill-rule="evenodd"/></svg>
<div style="position:absolute;left:8px;top:155px;width:60px;height:16px;transform:rotate(-90deg);transform-origin:0 0;font-family:'Liberation Sans',sans-serif;font-size:14px;line-height:16px;color:#d0d0d0;letter-spacing:0.3px">Project</div>
<svg style="position:absolute;left:7px;top:162px;overflow:visible" width="15" height="13" viewBox="0 0 15 13"><path d="M0 0.5 H5 L7 2.5 H14.5 V12.5 H0 Z" fill="#b4b4b4"/></svg>
<svg style="position:absolute;left:44px;top:111px;overflow:visible" width="18" height="17" viewBox="0 0 18 17"><rect x="0" y="0" width="18" height="17" fill="#6e7275"/><rect x="1.2" y="2.5" width="15.6" height="13.3" fill="#3c3f41"/><rect x="2.5" y="3.8" width="13" height="10.7" fill="#3f8fae"/></svg>
<svg style="position:absolute;left:139.5px;top:117.5px;overflow:visible" width="11" height="6" viewBox="0 0 11 6"><path d="M0 0 H11 L5.5 6 Z" fill="#afb1b3"/></svg>
<svg style="position:absolute;left:502px;top:110px;overflow:visible" width="18" height="18" viewBox="0 0 18 18"><circle cx="9" cy="9" r="7.8" fill="none" stroke="#afb1b3" stroke-width="1.8"/><path d="M9 0.5 V5.5 M9 12.5 V17.5 M0.5 9 H5.5 M12.5 9 H17.5" stroke="#afb1b3" stroke-width="1.8"/></svg>
<svg style="position:absolute;left:536px;top:110px;overflow:visible" width="16" height="18" viewBox="0 0 16 18"><rect x="0" y="0" width="16" height="2.2" fill="#afb1b3"/><rect x="0" y="15.6" width="16" height="2.2" fill="#afb1b3"/><path d="M8 3.8 L12.5 8 H3.5 Z M8 14 L12.5 9.8 H3.5 Z" fill="#afb1b3"/></svg>
<svg style="position:absolute;left:568px;top:110px;overflow:visible" width="16" height="18" viewBox="0 0 16 18"><rect x="0" y="7.8" width="16" height="2.2" fill="#afb1b3"/><path d="M3.5 0.5 H12.5 L8 5 Z M3.5 17 H12.5 L8 12.5 Z" fill="#afb1b3"/></svg>
<div style="position:absolute;left:596px;top:107px;width:1px;height:24px;background:#515151;"></div>
<svg style="position:absolute;left:610px;top:110px;overflow:visible" width="16" height="17" viewBox="0 0 16 17"><path d="M8 0 L10 0.3 L10.5 2.8 L12.5 3.8 L14.7 2.5 L16 4.3 L14.4 6.3 L14.8 8.5 L16 10.7 L14.7 12.7 L12.5 11.8 L10.5 12.8 L10 15.6 L8 16 L6 15.6 L5.5 12.8 L3.5 11.8 L1.3 12.7 L0 10.7 L1.6 8.5 L1.6 6.3 L0 4.3 L1.3 2.5 L3.5 3.8 L5.5 2.8 L6 0.3 Z" fill="#afb1b3"/><circle cx="8" cy="8" r="2.7" fill="#3c3f41"/></svg>
<div style="position:absolute;left:642px;top:117.5px;width:15.5px;height:2.6px;background:#afb1b3;"></div>
<svg style="position:absolute;left:678px;top:109px;overflow:visible" width="22" height="21" viewBox="0 0 22 21"><circle cx="10" cy="10" r="9" fill="#4396b8"/><path d="M12.2 7.3 A3.6 3.6 0 1 0 12.2 12.7" fill="none" stroke="#203a47" stroke-width="1.3"/><path d="M13.5 0.2 L20 4.5 L13.5 8.3 Z" fill="#5fb83f"/><polygon points="20.20,15.00 17.25,20.11 11.35,20.11 8.40,15.00 11.35,9.89 17.25,9.89" fill="#4e5254"/><polygon points="19.40,15.00 16.85,19.42 11.75,19.42 9.20,15.00 11.75,10.58 16.85,10.58" fill="#afb8c0"/><circle cx="14.3" cy="15" r="3.1" fill="#4396b8"/><path d="M13.14 13.82 A1.8 1.8 0 1 0 15.46 13.82" fill="none" stroke="#afb8c0" stroke-width="0.9"/><path d="M14.3 12.599999999999998 V15.5" stroke="#afb8c0" stroke-width="0.9"/></svg>
<svg style="position:absolute;left:888px;top:111px;overflow:visible" width="21" height="18" viewBox="0 0 21 18"><path d="M18.5 0.5 C17 3.5 14 4.5 10 5 C5 5.5 1 7.5 1 11.5 C1 14 3 15.5 5.5 15.5 C11 15.5 15 12.5 17 9 C18.5 6.5 18.8 3 18.5 0.5 Z" fill="#5a9e3f"/><path d="M4 15.9 Q7 16.9 10 15.9" stroke="#5a9e3f" stroke-width="1.1" fill="none"/><polygon points="20.90,12.80 17.70,18.34 11.30,18.34 8.10,12.80 11.30,7.26 17.70,7.26" fill="#3c3f41"/><polygon points="20.10,12.80 17.30,17.65 11.70,17.65 8.90,12.80 11.70,7.95 17.30,7.95" fill="#afb8c0"/><path d="M12.83 11.11 A2.6 2.6 0 1 0 16.17 11.11" fill="none" stroke="#3c3f41" stroke-width="1.2"/><path d="M14.5 9.7 V13.4" stroke="#3c3f41" stroke-width="1.2"/></svg>
<svg style="position:absolute;left:1205px;top:111px;overflow:visible" width="21" height="18" viewBox="0 0 21 18"><path d="M18.5 0.5 C17 3.5 14 4.5 10 5 C5 5.5 1 7.5 1 11.5 C1 14 3 15.5 5.5 15.5 C11 15.5 15 12.5 17 9 C18.5 6.5 18.8 3 18.5 0.5 Z" fill="#5a9e3f"/><path d="M4 15.9 Q7 16.9 10 15.9" stroke="#5a9e3f" stroke-width="1.1" fill="none"/><polygon points="20.90,12.80 17.70,18.34 11.30,18.34 8.10,12.80 11.30,7.26 17.70,7.26" fill="#3c3f41"/><polygon points="20.10,12.80 17.30,17.65 11.70,17.65 8.90,12.80 11.70,7.95 17.30,7.95" fill="#afb8c0"/><path d="M12.83 11.11 A2.6 2.6 0 1 0 16.17 11.11" fill="none" stroke="#3c3f41" stroke-width="1.2"/><path d="M14.5 9.7 V13.4" stroke="#3c3f41" stroke-width="1.2"/></svg>
<svg style="position:absolute;left:1463px;top:111px;overflow:visible" width="21" height="18" viewBox="0 0 21 18"><path d="M18.5 0.5 C17 3.5 14 4.5 10 5 C5 5.5 1 7.5 1 11.5 C1 14 3 15.5 5.5 15.5 C11 15.5 15 12.5 17 9 C18.5 6.5 18.8 3 18.5 0.5 Z" fill="#5a9e3f"/><path d="M4 15.9 Q7 16.9 10 15.9" stroke="#5a9e3f" stroke-width="1.1" fill="none"/><polygon points="20.90,12.80 17.70,18.34 11.30,18.34 8.10,12.80 11.30,7.26 17.70,7.26" fill="#3c3f41"/><polygon points="20.10,12.80 17.30,17.65 11.70,17.65 8.90,12.80 11.70,7.95 17.30,7.95" fill="#afb8c0"/><path d="M12.83 11.11 A2.6 2.6 0 1 0 16.17 11.11" fill="none" stroke="#3c3f41" stroke-width="1.2"/><path d="M14.5 9.7 V13.4" stroke="#3c3f41" stroke-width="1.2"/></svg>
<svg style="position:absolute;left:580px;top:78px;overflow:visible" width="22" height="21" viewBox="0 0 22 21"><circle cx="10" cy="10" r="9" fill="#4396b8"/><path d="M12.2 7.3 A3.6 3.6 0 1 0 12.2 12.7" fill="none" stroke="#203a47" stroke-width="1.3"/><path d="M13.5 0.2 L20 4.5 L13.5 8.3 Z" fill="#5fb83f"/><polygon points="20.20,15.00 17.25,20.11 11.35,20.11 8.40,15.00 11.35,9.89 17.25,9.89" fill="#3c3f41"/><polygon points="19.40,15.00 16.85,19.42 11.75,19.42 9.20,15.00 11.75,10.58 16.85,10.58" fill="#afb8c0"/><circle cx="14.3" cy="15" r="3.1" fill="#4396b8"/><path d="M13.14 13.82 A1.8 1.8 0 1 0 15.46 13.82" fill="none" stroke="#afb8c0" stroke-width="0.9"/><path d="M14.3 12.599999999999998 V15.5" stroke="#afb8c0" stroke-width="0.9"/></svg>
<svg style="position:absolute;left:702px;top:283px;overflow:visible" width="21" height="21" viewBox="0 0 21 21"><clipPath id="cpb"><rect x="0" y="0" width="20" height="20"/></clipPath><circle cx="9.8" cy="9.8" r="8.8" fill="#5b9e40"/><path d="M0.5 3.5 L16.5 19.5" stroke="#313335" stroke-width="2"/><circle cx="5.2" cy="12.9" r="4.6" fill="#313335"/><circle cx="5.2" cy="12.9" r="3.2" fill="#313335" stroke="#afb8c0" stroke-width="1.4"/><path d="M7.5 15.3 L11 18.8" stroke="#afb8c0" stroke-width="1.6"/></svg>
<svg style="position:absolute;left:702px;top:312px;overflow:visible" width="21" height="21" viewBox="0 0 21 21"><clipPath id="cpb"><rect x="0" y="0" width="20" height="20"/></clipPath><circle cx="9.8" cy="9.8" r="8.8" fill="#5b9e40"/><path d="M0.5 3.5 L16.5 19.5" stroke="#313335" stroke-width="2"/><circle cx="13.6" cy="13.2" r="6" fill="#313335"/><circle cx="13.6" cy="13.2" r="5" fill="#3d8fb3"/><path d="M11.5 13 H15.8 A2.2 2.2 0 1 0 15.3 15" fill="none" stroke="#1f3b48" stroke-width="1.1"/><path d="M14 16 H20.5 L17.2 19.5 Z" fill="#c8c8c8"/></svg>
<svg style="position:absolute;left:730px;top:315px;overflow:visible" width="11" height="16" viewBox="0 0 11 16"><path d="M0 0.6 L10.7 7.6 L0 15.1 Z" fill="#499c54"/></svg>
<svg style="position:absolute;left:718.5px;top:372px;overflow:visible" width="11" height="15" viewBox="0 0 11 15"><path d="M0 0 L10.3 7.3 L0 14.7 Z" fill="#499c54"/></svg>
<div style="position:absolute;left:164px;top:503px;width:200px;height:32px;border:3px solid #f23b3b"></div>
<div style="position:absolute;left:673px;top:267px;width:82px;height:160px;border:3px solid #f23b3b"></div>
<svg style="position:absolute;left:0px;top:0px;overflow:visible" width="1772" height="779" viewBox="0 0 1772 779"><path d="M754 321.6 L765 307 L767.6 310.3 L1123.8 107.1 L1124.1 107.7 L770.9 316.6 L772.3 320.7 Z" fill="#f23b3b"/></svg>
</body></html>
